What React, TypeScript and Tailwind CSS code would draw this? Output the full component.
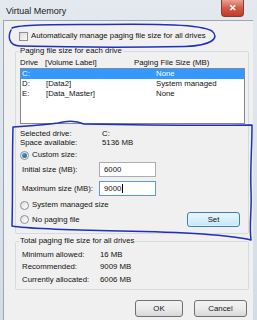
import React from "react";

function Radio({ checked }: { checked?: boolean }) {
  return (
    <span className="w-[9px] h-[9px] rounded-full border border-[#8a8f96] bg-gradient-to-br from-[#e0e0e0] to-[#ffffff] flex items-center justify-center shrink-0">
      {checked && <span className="w-[5px] h-[5px] rounded-full bg-gradient-to-br from-[#5aa0d8] to-[#1a5c92]" />}
    </span>
  );
}

export default function App() {
  return (
    <div className="relative w-[257px] h-[320px] overflow-hidden bg-gradient-to-b from-[#e4e9ef] to-[#d3dce6] font-['Liberation_Sans',Arial,sans-serif] text-[#111]">
      <div className="flex flex-col h-full">
        {/* Title bar */}
        <div className="h-[20px] flex items-start shrink-0">
          <span className="ml-[6px] mt-[5px] text-[9px] leading-[12px] text-[#1a1a1a]">Virtual Memory</span>
          <div className="ml-auto mr-[13px] w-[23px] h-[17px] rounded-b-[4px] border border-t-0 border-[#8a3a32] bg-gradient-to-b from-[#e6a196] via-[#d05a48] to-[#c23a27] flex items-center justify-center">
            <span className="text-white text-[9px] font-bold leading-none">✕</span>
          </div>
        </div>
        {/* Client */}
        <div className="flex-1 ml-[3px] mr-[4px] border-l border-t border-[#9aa6b2] bg-[#f0f0f0] flex flex-col text-[7.8px] leading-[10px]">
          <div className="mt-[10px] ml-[15px] h-[10px] flex items-center gap-[3px]">
            <span className="w-[9px] h-[9px] border border-[#8f8f8f] bg-gradient-to-br from-[#dcdcdc] to-[#fafafa]" />
            <span>Automatically manage paging file size for all drives</span>
          </div>

          <fieldset className="mt-[5px] ml-[11px] mr-[4px] border border-[#d5dcdf] rounded-[2px] pl-[3px] pr-[3px] pb-[6px]">
            <legend className="px-[1px] leading-[10px]">Paging file size for each drive</legend>
            <div className="mt-[2px] h-[10px] flex items-center ml-[1px]">
              <span className="w-[25px]">Drive</span>
              <span className="w-[89px]">[Volume Label]</span>
              <span>Paging File Size (MB)</span>
            </div>
            <div className="h-[56px] ml-[1px] border border-[#828790] bg-white flex flex-col">
              <div className="h-[10px] flex items-center bg-[#3399ff] text-white">
                <span className="ml-[1px] w-[24px]">C:</span>
                <span className="w-[110px]"></span>
                <span>None</span>
              </div>
              <div className="h-[10px] flex items-center">
                <span className="ml-[1px] w-[24px]">D:</span>
                <span className="w-[110px]">[Data2]</span>
                <span>System managed</span>
              </div>
              <div className="h-[10px] flex items-center">
                <span className="ml-[1px] w-[24px]">E:</span>
                <span className="w-[110px]">[Data_Master]</span>
                <span>None</span>
              </div>
            </div>

            <div className="mt-[5px] h-[9px] flex items-center ml-[1px]">
              <span className="w-[82px]">Selected drive:</span>
              <span>C:</span>
            </div>
            <div className="h-[9px] flex items-center ml-[1px]">
              <span className="w-[82px]">Space available:</span>
              <span>5136 MB</span>
            </div>

            <div className="mt-[3px] h-[10px] flex items-center gap-[3px] ml-[1px]">
              <Radio checked />
              <span>Custom size:</span>
            </div>
            <div className="mt-[2px] h-[15px] flex items-center ml-[3px]">
              <span className="w-[77px]">Initial size (MB):</span>
              <div className="w-[57px] h-[15px] border border-[#abadb3] bg-white flex items-center pl-[4px]">6000</div>
            </div>
            <div className="mt-[4px] h-[15px] flex items-center ml-[3px]">
              <span className="w-[77px]">Maximum size (MB):</span>
              <div className="w-[57px] h-[15px] border border-[#5b9bd5] bg-white flex items-center pl-[4px]">
                9000<span className="w-px h-[9px] bg-black ml-[1px]" />
              </div>
            </div>
            <div className="mt-[4px] h-[10px] flex items-center gap-[3px] ml-[1px]">
              <Radio />
              <span>System managed size</span>
            </div>
            <div className="mt-[2px] h-[15px] flex items-center gap-[3px] ml-[1px]">
              <Radio />
              <span>No paging file</span>
              <div className="ml-auto mr-[5px] w-[53px] h-[15px] rounded-[3px] border border-[#3c7fb1] bg-gradient-to-b from-[#eaf6fd] via-[#d9f0fc] to-[#bee6fd] flex items-center justify-center shadow-[inset_0_0_0_1px_#dff3fd]">
                Set
              </div>
            </div>
          </fieldset>

          <fieldset className="mt-[2px] ml-[11px] mr-[4px] border border-[#d5dcdf] rounded-[2px] pl-[3px] pr-[3px] pb-[4px]">
            <legend className="px-[1px] leading-[10px]">Total paging file size for all drives</legend>
            <div className="mt-[4px] h-[10px] flex items-center ml-[3px]">
              <span className="w-[78px]">Minimum allowed:</span>
              <span>16 MB</span>
            </div>
            <div className="mt-[2px] h-[10px] flex items-center ml-[3px]">
              <span className="w-[78px]">Recommended:</span>
              <span>9009 MB</span>
            </div>
            <div className="mt-[3px] h-[10px] flex items-center ml-[3px]">
              <span className="w-[78px]">Currently allocated:</span>
              <span>6006 MB</span>
            </div>
          </fieldset>

          <div className="mt-[10px] mr-[6px] flex justify-end gap-[11px]">
            <div className="w-[48px] h-[17px] rounded-[3px] border border-[#707070] bg-gradient-to-b from-[#f2f2f2] via-[#ebebeb] to-[#d8d8d8] flex items-center justify-center">OK</div>
            <div className="w-[53px] h-[17px] rounded-[3px] border border-[#707070] bg-gradient-to-b from-[#f2f2f2] via-[#ebebeb] to-[#d8d8d8] flex items-center justify-center">Cancel</div>
          </div>
        </div>
      </div>

      <svg className="absolute inset-0 pointer-events-none" width="257" height="320" viewBox="0 0 257 320">
        <path
          d="M 12 28 C 20 24, 60 24.5, 100 24.5 C 160 24, 200 24, 212 31 C 220 38, 212 45.5, 185 46.5 C 130 47.5, 60 47, 20 46 C 8 45.5, 8 36, 11 30"
          fill="none"
          stroke="#1f2fbf"
          strokeWidth="1.5"
          strokeLinecap="round"
        />
        <path
          d="M 13 127 C 30 126, 45 125, 58 123 C 66 121, 76 120.5, 84 124 C 140 125, 200 125.5, 252 125 C 252 150, 250 170, 251 190 C 252 210, 249 225, 251 240 C 230 235, 180 232, 120 231 C 70 230, 30 229, 12 226 C 13 190, 12 160, 13 127"
          fill="none"
          stroke="#1f2fbf"
          strokeWidth="1.5"
          strokeLinecap="round"
          strokeLinejoin="round"
        />
      </svg>
    </div>
  );
}
